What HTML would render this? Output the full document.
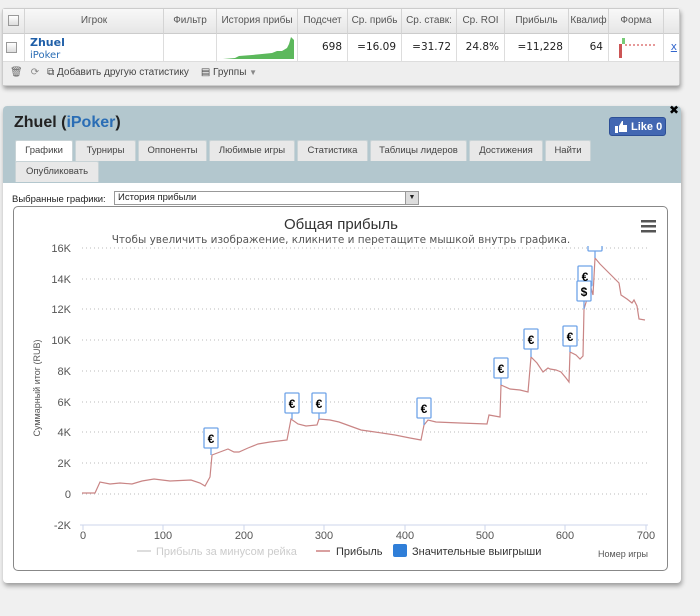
<!DOCTYPE html>
<html><head><meta charset="utf-8"><style>
*{box-sizing:border-box;margin:0;padding:0}
body{width:700px;height:616px;background:#f0f0f0;font-family:"Liberation Sans","DejaVu Sans",sans-serif;position:relative;overflow:hidden}
.a{position:absolute}
.top{left:2px;top:8px;width:678px;height:78px;background:#fff;border:1px solid #ccc;box-shadow:1px 3px 4px rgba(0,0,0,.35);border-radius:3px}
.th{top:0;height:25px;background:linear-gradient(#f8f8f8,#e6e6e6);border-bottom:1px solid #ccc;border-right:1px solid #d4d4d4;font-size:10px;color:#555;text-align:center;line-height:24px;white-space:nowrap;overflow:hidden}
.td{top:25px;height:27px;border-right:1px solid #ddd;font-size:10.5px;color:#222;text-align:right;line-height:27px;padding-right:5px;font-family:"DejaVu Sans",sans-serif}
.cb{width:11px;height:11px;border:1px solid #999;background:linear-gradient(#fff,#ddd)}
.tool{left:0;top:52px;width:676px;height:24px;background:#eee;border-top:1px solid #ddd;font-size:10px;color:#444;line-height:22px}
.panel{left:3px;top:106px;width:678px;height:477px;background:#fff;border-radius:4px;box-shadow:1px 3px 5px rgba(0,0,0,.35)}
.hdr{left:0;top:0;width:678px;height:77px;background:#b3c7ce;border-radius:4px 4px 0 0}
.tab{height:21px;background:#e8e8e8;border:1px solid #c8d3d6;border-bottom:none;font-size:9.5px;color:#444;line-height:20px;text-align:center;border-radius:2px 2px 0 0}
.chart{left:13px;top:206px;width:655px;height:365px;border:1px solid #888;border-radius:5px}
</style></head><body>
<div class="a top">
 <div class="a th" style="left:0;width:22px"><div class="cb" style="margin:6px auto"></div></div>
 <div class="a th" style="left:22px;width:139px">Игрок</div>
 <div class="a th" style="left:161px;width:53px">Фильтр</div>
 <div class="a th" style="left:214px;width:81px">История прибы</div>
 <div class="a th" style="left:295px;width:50px">Подсчет</div>
 <div class="a th" style="left:345px;width:54px">Ср. прибь</div>
 <div class="a th" style="left:399px;width:55px">Ср. ставк:</div>
 <div class="a th" style="left:454px;width:48px">Ср. ROI</div>
 <div class="a th" style="left:502px;width:64px">Прибыль</div>
 <div class="a th" style="left:566px;width:40px">Квалиф</div>
 <div class="a th" style="left:606px;width:55px">Форма</div>
 <div class="a th" style="left:661px;width:15px;border-right:none"></div>
 <div class="a td" style="left:0;width:22px"><div class="cb" style="margin:8px auto"></div></div>
 <div class="a td" style="left:22px;width:139px;text-align:left;line-height:12px;padding:3px 0 0 5px"><b style="color:#1f5fa8;font-size:11px">Zhuel</b><br><span style="color:#2a6db5;font-size:10px">iPoker</span></div>
 <div class="a td" style="left:161px;width:53px"></div>
 <div class="a td" style="left:214px;width:81px;padding:0"><svg width="80" height="27"><path d="M6 25 L18 24 L22 22 L35 21 L45 20 L55 19 L60 17 L65 17 L70 14 L72 10 L74 3 L77 6 L77 25Z" fill="#5cb85c"/></svg></div>
 <div class="a td" style="left:295px;width:50px">698</div>
 <div class="a td" style="left:345px;width:54px">=16.09</div>
 <div class="a td" style="left:399px;width:55px">=31.72</div>
 <div class="a td" style="left:454px;width:48px">24.8%</div>
 <div class="a td" style="left:502px;width:64px">=11,228</div>
 <div class="a td" style="left:566px;width:40px">64</div>
 <div class="a td" style="left:606px;width:55px;padding:0"><svg width="55" height="27"><rect x="10" y="10" width="3" height="14" fill="#c55"/><rect x="13" y="4" width="3" height="6" fill="#7c7"/><line x1="16" y1="11" x2="48" y2="11" stroke="#c33" stroke-dasharray="2,2"/></svg></div>
 <div class="a td" style="left:661px;width:15px;border-right:none;color:#36c;text-decoration:underline;padding-right:2px">x</div>
 <div class="a tool"><span style="margin-left:7px;color:#666">🗑</span><span style="margin-left:8px;color:#888">⟳</span><span style="margin-left:8px">⧉ Добавить другую статистику</span><span style="margin-left:12px">▤ Группы <span style="color:#888;font-size:8px">▼</span></span></div>
</div>

<div class="a panel">
 <div class="a hdr">
  <div class="a" style="left:11px;top:8px;font-size:16px;font-weight:bold;color:#222">Zhuel (<span style="color:#2a6db5;font-weight:bold">iPoker</span>)</div>
  <div class="a" style="left:606px;top:11px;width:57px;height:19px;background:#4267b2;border-radius:3px;color:#fff;font-size:11px;font-weight:bold;line-height:19px;padding-left:21px;border:1px solid #2d4f96">Like 0<svg class="a" style="left:5px;top:3px" width="13" height="12"><rect x="0" y="5" width="3" height="7" fill="#fff"/><path d="M4 5 L7 0 L8 0 L8 4 L12 4 L12 11 L4 11Z" fill="#fff"/></svg></div>
  <div class="a" style="left:666px;top:-3px;font-size:12px;font-weight:bold">✖</div>
  <div class="a tab" style="left:12px;top:34px;width:58px;background:#fff;height:22px">Графики</div>
  <div class="a tab" style="left:72px;top:34px;width:61px">Турниры</div>
  <div class="a tab" style="left:135px;top:34px;width:69px">Оппоненты</div>
  <div class="a tab" style="left:206px;top:34px;width:86px">Любимые игры</div>
  <div class="a tab" style="left:294px;top:34px;width:71px">Статистика</div>
  <div class="a tab" style="left:367px;top:34px;width:97px">Таблицы лидеров</div>
  <div class="a tab" style="left:466px;top:34px;width:74px">Достижения</div>
  <div class="a tab" style="left:542px;top:34px;width:46px">Найти</div>
  <div class="a tab" style="left:12px;top:55px;width:84px">Опубликовать</div>
 </div>
 <div class="a" style="left:9px;top:88px;font-size:9.5px;color:#222">Выбранные графики:</div>
 <div class="a" style="left:111px;top:85px;width:305px;height:14px;border:1px solid #999;font-size:9.5px;line-height:12px;padding-left:3px;color:#222">История прибыли<div class="a" style="right:0;top:0;width:13px;height:12px;background:#ddd;border-left:1px solid #999;font-size:7px;text-align:center">▼</div></div>
</div>

<div class="a chart"></div>
<svg class="a" style="left:0;top:0" width="700" height="616" font-family="Liberation Sans, DejaVu Sans, sans-serif">
 <defs><clipPath id="pc"><rect x="60" y="246" width="620" height="300"/></clipPath></defs>
 <text x="341" y="229" font-size="15" fill="#333" text-anchor="middle">Общая прибыль</text>
 <text x="341" y="243" font-size="10.5" fill="#555" text-anchor="middle" font-family="DejaVu Sans, sans-serif">Чтобы увеличить изображение, кликните и перетащите мышкой внутрь графика.</text>
 <g fill="#555"><rect x="641" y="220" width="15" height="2.5"/><rect x="641" y="225" width="15" height="2.5"/><rect x="641" y="230" width="15" height="2.5"/></g>
 <g stroke="#bbb" stroke-dasharray="1,3">
  <line x1="82" y1="248" x2="650" y2="248"/><line x1="82" y1="279" x2="650" y2="279"/><line x1="82" y1="309" x2="650" y2="309"/><line x1="82" y1="340" x2="650" y2="340"/><line x1="82" y1="371" x2="650" y2="371"/><line x1="82" y1="402" x2="650" y2="402"/><line x1="82" y1="432" x2="650" y2="432"/><line x1="82" y1="463" x2="650" y2="463"/><line x1="82" y1="494" x2="650" y2="494"/>
 </g>
 <line x1="80" y1="525" x2="648" y2="525" stroke="#ccd6eb"/>
 <g stroke="#ccd6eb"><line x1="83" y1="525" x2="83" y2="530"/><line x1="163" y1="525" x2="163" y2="530"/><line x1="244" y1="525" x2="244" y2="530"/><line x1="324" y1="525" x2="324" y2="530"/><line x1="405" y1="525" x2="405" y2="530"/><line x1="485" y1="525" x2="485" y2="530"/><line x1="565" y1="525" x2="565" y2="530"/><line x1="646" y1="525" x2="646" y2="530"/></g>
 <g font-size="11" fill="#555" text-anchor="end">
  <text x="71" y="252">16K</text><text x="71" y="283">14K</text><text x="71" y="313">12K</text><text x="71" y="344">10K</text><text x="71" y="375">8K</text><text x="71" y="406">6K</text><text x="71" y="436">4K</text><text x="71" y="467">2K</text><text x="71" y="498">0</text><text x="71" y="529">-2K</text>
 </g>
 <g font-size="11" fill="#555" text-anchor="middle">
  <text x="83" y="539">0</text><text x="163" y="539">100</text><text x="244" y="539">200</text><text x="324" y="539">300</text><text x="405" y="539">400</text><text x="485" y="539">500</text><text x="565" y="539">600</text><text x="646" y="539">700</text>
 </g>
 <text transform="translate(40,388) rotate(-90)" font-size="9" fill="#555" text-anchor="middle">Суммарный итог (RUB)</text>
 <text x="648" y="557" font-size="9" fill="#555" text-anchor="end">Номер игры</text>
 <line x1="137" y1="551" x2="151" y2="551" stroke="#ddd" stroke-width="2"/>
 <text x="156" y="555" font-size="11" fill="#ccc">Прибыль за минусом рейка</text>
 <line x1="316" y1="551" x2="330" y2="551" stroke="#d9a0a0" stroke-width="2"/>
 <text x="336" y="555" font-size="11" fill="#333">Прибыль</text>
 <rect x="393" y="544" width="14" height="13" rx="2" fill="#2f7ed8"/>
 <text x="412" y="555" font-size="11" fill="#333">Значительные выигрыши</text>
 <polyline fill="none" stroke="#c98585" stroke-width="1.2" points="82,493 95,493 100,482 110,484 120,483 132,484 142,481 154,479 170,481 191,480 200,483 205,486 210,477 212,455 220,452 228,449 234,452 239,452 248,448 258,444 270,442 287,440 291,419 298,424 306,426 317,425 319,419 330,420 339,422 350,426 361,430 375,432 395,435 410,438 421,440 424,425 428,420 436,422 460,423 487,424 489,415 500,417 501,385 510,389 520,390 528,392 531,357 537,363 543,372 548,368 550,369 556,370 561,372 566,378 569,382 570,352 576,355 580,359 583,356 584,309 588,296 591,288 593,295 595,258 600,264 602,266 610,274 619,283 621,295 627,299 632,303 634,300 637,306 639,319 645,320"/>
 <g stroke="#6fa3e8" fill="#fff" stroke-width="1.3">
  <line x1="211" y1="448" x2="211" y2="455"/><rect x="204" y="428" width="14" height="20" rx="1"/>
  <line x1="292" y1="413" x2="292" y2="419"/><rect x="285" y="393" width="14" height="20" rx="1"/>
  <line x1="319" y1="413" x2="319" y2="419"/><rect x="312" y="393" width="14" height="20" rx="1"/>
  <line x1="424" y1="418" x2="424" y2="425"/><rect x="417" y="398" width="14" height="20" rx="1"/>
  <line x1="501" y1="378" x2="501" y2="385"/><rect x="494" y="358" width="14" height="20" rx="1"/>
  <line x1="531" y1="349" x2="531" y2="357"/><rect x="524" y="329" width="14" height="20" rx="1"/>
  <line x1="570" y1="346" x2="570" y2="352"/><rect x="563" y="326" width="14" height="20" rx="1"/>
  <g clip-path="url(#pc)"><rect x="588" y="231" width="14" height="20" rx="1"/></g><line x1="595" y1="251" x2="595" y2="258"/>
  <rect x="578" y="266" width="14" height="20" rx="1"/><line x1="585" y1="286" x2="585" y2="292"/>
  <line x1="584" y1="301" x2="584" y2="309"/><rect x="577" y="281" width="14" height="20" rx="1"/>
 </g>
 <g font-size="12" font-weight="bold" fill="#000" text-anchor="middle">
  <text x="211" y="443">€</text><text x="292" y="408">€</text><text x="319" y="408">€</text><text x="424" y="413">€</text><text x="501" y="373">€</text><text x="531" y="344">€</text><text x="570" y="341">€</text><text x="585" y="281">€</text><text x="584" y="296">$</text>
 </g>
</svg>
</body></html>
